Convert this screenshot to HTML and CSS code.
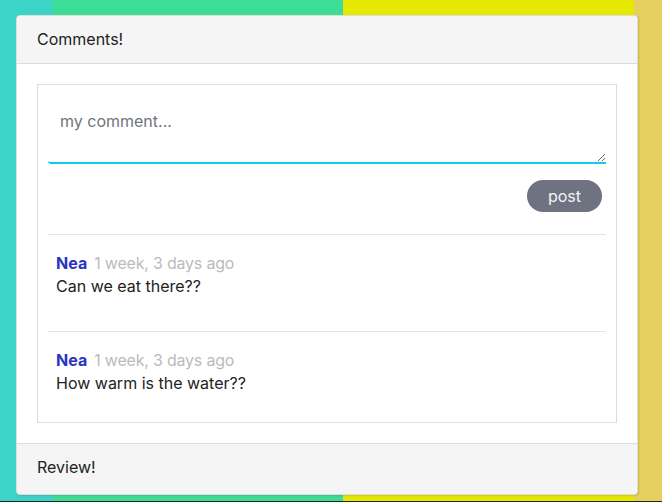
FILE: index.html
```html
<!DOCTYPE html>
<html>
<head>
<meta charset="utf-8">
<link rel="stylesheet" href="styles.css">
</head>
<body>
<div class="page">
  <div class="card">
    <div class="card-header">Comments!</div>
    <div class="card-body">
      <div class="comments-box">
        <textarea class="comment-input" placeholder="my comment..."></textarea>
        <div class="actions"><button class="post-btn">post</button></div>
        <div class="comment">
          <div class="meta"><span class="author">Nea</span><span class="time">1 week, 3 days ago</span></div>
          <div class="text">Can we eat there??</div>
        </div>
        <div class="comment">
          <div class="meta"><span class="author">Nea</span><span class="time">1 week, 3 days ago</span></div>
          <div class="text">How warm is the water??</div>
        </div>
      </div>
    </div>
    <div class="card-footer">Review!</div>
  </div>
</div>
</body>
</html>
```
FILE: styles.css
```css
html, body {
  margin: 0;
  height: 100%;
}
body {
  font-family: Inter, "Noto Sans", sans-serif;
  color: #222;
  background: linear-gradient(to right,
    #3dd4c8 0, #3dd4c8 53px,
    #3ddc97 53px, #3ddc97 342px,
    #3dd4b8 342px, #3dd4b8 343px,
    #e5e800 343px, #e5e800 634px,
    #e5cf5f 634px, #e5cf5f 100%);
  border-bottom: 1px solid #222;
  box-sizing: border-box;
}
.page {
  padding: 15px 24px 0 16px;
}
.card {
  background: #fff;
  border: 1px solid #ddd;
  border-radius: 4px;
  overflow: hidden;
  box-shadow: 1px 1px 2px rgba(0,0,0,0.12);
}
.card-header, .card-footer {
  background: #f5f5f5;
  font-size: 16px;
  line-height: 22px;
}
.card-header { border-bottom: 1px solid #ddd; padding: 12px 20px 13px; }
.card-footer { border-top: 1px solid #ddd; padding: 12px 20px 16px; }
.card-body {
  padding: 20px;
}
.comments-box {
  border: 1px solid #ddd;
  padding: 11px 10px 3px;
}
.comment-input {
  display: block;
  box-sizing: border-box;
  width: 100%;
  height: 68px;
  border: none;
  border-bottom: 2px solid #17c8ef;
  border-radius: 0 0 0 3px;
  padding: 14px 12px;
  font-family: inherit;
  font-size: 16px;
  line-height: 22px;
  color: #222;
  outline: none;
  resize: vertical;
}
.comment-input::placeholder { color: #6f757d; }
.actions {
  display: flex;
  justify-content: flex-end;
  padding: 16px 4px 22px 0;
}
.post-btn {
  width: 75px;
  height: 32px;
  border: none;
  border-radius: 16px;
  background: #6f7280;
  color: #f4f4f6;
  font-family: inherit;
  font-size: 16px;
}
.comment {
  border-top: 1px solid #e4e4e4;
  padding: 17px 8px 33px;
  font-size: 16px;
  line-height: 23px;
}
.comment:last-child { padding-bottom: 24px; }
.author {
  color: #2a33c4;
  font-weight: 700;
  margin-right: 7px;
}
.time { color: #bbb; letter-spacing: -0.2px; }
```
